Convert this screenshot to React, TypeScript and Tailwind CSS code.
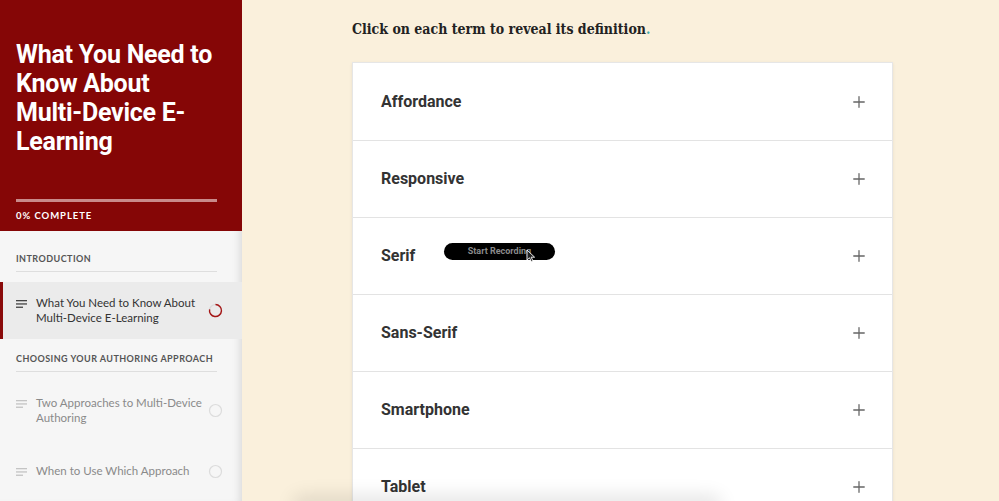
import { Plus } from "lucide-react";

const terms = ["Affordance", "Responsive", "Serif", "Sans-Serif", "Smartphone", "Tablet"];

function LinesIcon({ muted }: { muted?: boolean }) {
  return (
    <svg width="12" height="10" viewBox="0 0 12 10" className={muted ? "text-[#c4c4c4]" : "text-[#444]"}>
      <rect x="0" y="1" width="11" height="1.3" fill="currentColor" />
      <rect x="0" y="4.3" width="11" height="1.3" fill="currentColor" />
      <rect x="0" y="7.6" width="7" height="1.3" fill="currentColor" />
    </svg>
  );
}

function StatusRing({ active }: { active?: boolean }) {
  return (
    <svg width="15" height="15" viewBox="0 0 15 15" className="shrink-0">
      <circle cx="7.5" cy="7.5" r="6" fill="none" stroke={active ? "#d9d9d9" : "#dcdcdc"} strokeWidth="1.2" />
      {active ? (
        <path d="M7.5 1.5 A6 6 0 1 1 1.6 6.3" fill="none" stroke="#a51616" strokeWidth="1.4" />
      ) : null}
    </svg>
  );
}

function SectionLabel({ children }: { children: string }) {
  return (
    <div className="ml-4 mr-[25px] border-b border-[#dedede] pb-[6px] text-[9px] font-bold uppercase leading-[13px] tracking-[0.05em] text-[#555]">
      {children}
    </div>
  );
}

function Lesson({ title, active }: { title: string; active?: boolean }) {
  return (
    <div
      className={
        active
          ? "flex items-center border-l-[3px] border-[#8a0a0a] bg-[#ebebeb] py-[14px] pl-[13px] pr-[19px]"
          : "flex items-center py-[14px] pl-4 pr-[19px]"
      }
    >
      <div className="self-start pt-[3px]">
        <LinesIcon muted={!active} />
      </div>
      <div className={"ml-2 flex-1 text-[11.5px] leading-[14.5px] " + (active ? "text-[#333]" : "text-[#8a8a8a]")}>
        {title}
      </div>
      <StatusRing active={active} />
    </div>
  );
}

export default function App() {
  return (
    <div className="flex h-[501px] w-[999px] overflow-hidden bg-[#faf0dc]" style={{ fontFamily: "Lato, 'Open Sans', sans-serif" }}>
      <aside className="relative z-10 flex w-[242px] shrink-0 flex-col bg-[#f6f6f6] shadow-[inset_-8px_0_8px_-6px_rgba(0,0,0,0.12)]">
        <div className="flex h-[231px] shrink-0 flex-col bg-[#850606] px-4 pt-[40px]">
          <h1 className="w-[200px] text-[25px] font-bold leading-[29px] tracking-[-0.01em] text-white" style={{ fontFamily: "Roboto, sans-serif" }}>
            What You Need to Know About Multi-Device E-Learning
          </h1>
          <div className="mt-auto mb-[6px] h-[3px] w-[201px] bg-[#c98a8a]" />
          <div className="mb-[8px] text-[9.5px] font-bold uppercase leading-[15px] tracking-[0.1em] text-white">0% Complete</div>
        </div>
        <div className="shrink-0 pt-[21px]">
          <SectionLabel>Introduction</SectionLabel>
          <div className="mt-[10px]">
            <Lesson title="What You Need to Know About Multi-Device E-Learning" active />
          </div>
          <div className="mt-[13px]">
            <SectionLabel>Choosing Your Authoring Approach</SectionLabel>
          </div>
          <div className="mt-[10px]">
            <Lesson title="Two Approaches to Multi-Device Authoring" />
          </div>
          <div className="mt-[11px]">
            <Lesson title="When to Use Which Approach" />
          </div>
        </div>
      </aside>

      <main className="relative flex-1 pl-[110px]">
        <p
          className="pt-[19px] text-[14px] font-bold text-[#222] font-stretch-condensed"
          style={{ fontFamily: "'DejaVu Serif', 'Liberation Serif', serif" }}
        >
          Click on each term to reveal its definition<span className="text-[#4aa]">.</span>
        </p>
        <div className="mt-[22px] w-[541px] border border-[#e6e6e6] bg-white shadow-[0_1px_3px_rgba(0,0,0,0.08)]">
          {terms.map((t, i) => (
            <div
              key={t}
              className={"relative flex h-[77px] items-center justify-between pl-[28px] pr-[24px] " + (i > 0 ? "border-t border-[#e3e3e3]" : "")}
            >
              <span className="text-[16px] font-bold text-[#333]" style={{ fontFamily: "Roboto, sans-serif" }}>
                {t}
              </span>
              <Plus className="h-[18px] w-[18px] text-[#666]" strokeWidth={1.7} />
              {t === "Serif" ? (
                <div className="absolute left-[91px] top-[25px] flex h-[17px] w-[111px] items-center justify-center rounded-full bg-black">
                  <span className="text-[9px] font-bold text-[#8a8a8a]" style={{ fontFamily: "Roboto, sans-serif" }}>
                    Start Recording
                  </span>
                  <svg width="10" height="14" viewBox="0 0 10 14" className="absolute left-[82px] top-[6px]">
                    <path d="M1 1 L1 11 L3.5 8.8 L5.4 12.8 L7 12 L5.2 8.2 L8.6 8.2 Z" fill="#222" stroke="#fff" strokeWidth="0.9" />
                  </svg>
                </div>
              ) : null}
            </div>
          ))}
        </div>
        <div className="absolute bottom-[-20px] left-[50px] h-[20px] w-[430px] rounded-full shadow-[0_-6px_18px_rgba(0,0,0,0.10)]" />
      </main>
    </div>
  );
}
